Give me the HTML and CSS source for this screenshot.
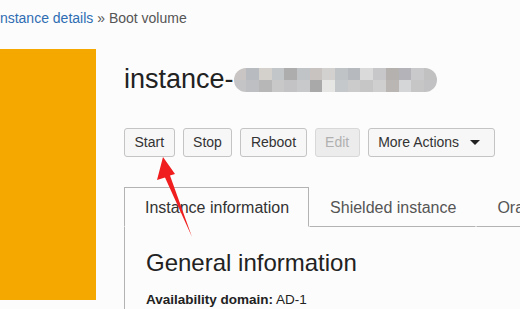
FILE: index.html
```html
<!DOCTYPE html>
<html lang="en">
<head>
    <meta charset="UTF-8">
    <meta name="viewport" content="width=device-width, initial-scale=1.0">
    <title>Boot volume</title>
    <link rel="stylesheet" href="styles.css">
</head>
<body>
    <div class="crumbs">
        <a href="#">Instance details</a> » <span>Boot volume</span>
    </div>

    <div class="layout">
        <div class="side"></div>

        <div class="main">
            <h1 class="title">
                instance-<span class="blur">
                    <i style="background:#c9c5c4"></i><i style="background:#b8bcc0"></i><i style="background:#d4d1cd"></i><i style="background:#c3c6c9"></i><i style="background:#adadad"></i><i style="background:#c1c4c7"></i><i style="background:#c8c3c0"></i><i style="background:#d3d1cf"></i><i style="background:#bfc3c6"></i><i style="background:#b6babe"></i><i style="background:#dadada"></i><i style="background:#c7c7c9"></i><i style="background:#b5b1af"></i><i style="background:#b3b3b9"></i><i style="background:#c9c9cb"></i><i style="background:#c1c1c1"></i>
                    <i style="background:#c4c4c6"></i><i style="background:#bdbfc2"></i><i style="background:#b7b7b7"></i><i style="background:#c8c8c8"></i><i style="background:#c3c3c5"></i><i style="background:#c7c9cb"></i><i style="background:#a9a9a9"></i><i style="background:#e6e6e4"></i><i style="background:#c5c8cb"></i><i style="background:#cbcbcb"></i><i style="background:#c6c6c6"></i><i style="background:#cfcfcf"></i><i style="background:#b9b6b4"></i><i style="background:#d5d6d8"></i><i style="background:#c6c6c6"></i><i style="background:#c2c2c4"></i>
                </span>
            </h1>

            <div class="actions">
                <button class="btn">Start</button>
                <button class="btn">Stop</button>
                <button class="btn">Reboot</button>
                <button class="btn" disabled>Edit</button>
                <button class="btn">More Actions <span class="caret"></span></button>
            </div>

            <div class="tabs">
                <div class="tab active">Instance information</div>
                <div class="tab">Shielded instance</div>
                <div class="tab">Oracle Cloud Agent</div>
                <div class="tab-fill"></div>
            </div>

            <div class="panel">
                <h2>General information</h2>
                <p class="field"><b>Availability domain:</b> AD-1</p>
            </div>
        </div>
    </div>

    <!-- red annotation arrow pointing at Start -->
    <svg class="arrow" width="520" height="309" viewBox="0 0 520 309">
        <polygon points="163,157 175,174 170,175.5 192,237 165,177.5 157,180" fill="#f01e1e"/>
    </svg>
</body>
</html>
```

FILE: styles.css
```css
body {
    font-family: "Liberation Sans", Arial, sans-serif;
    margin: 0;
    padding: 0;
    background-color: #fcfcfc;
    color: #333;
    width: 520px;
    height: 309px;
    overflow: hidden;
    position: relative;
}
.crumbs {
    font-size: 14px;
    line-height: 16px;
    padding-top: 10px;
    margin-bottom: 23px;
    margin-left: -4px;
    color: #555;
    white-space: nowrap;
}
.crumbs a {
    color: #2f6db3;
    text-decoration: none;
}
.layout {
    display: flex;
}
.side {
    width: 96px;
    height: 251px;
    flex-shrink: 0;
    background-color: #f5a800;
}
.main {
    padding-left: 28px;
    min-width: 0;
    flex: 1;
}
.title {
    display: flex;
    align-items: center;
    margin: 14px 0 0;
    font-size: 27px;
    line-height: 32px;
    font-weight: normal;
    color: #222;
}
.blur {
    display: grid;
    grid-template-columns: repeat(16, 1fr);
    width: 203px;
    height: 24px;
    margin-top: 2px;
    border-radius: 12px;
    overflow: hidden;
}
.actions {
    display: flex;
    gap: 8px;
    margin-top: 33px;
}
.btn {
    font-family: inherit;
    font-size: 14px;
    line-height: 17px;
    padding: 5px 9.5px;
    color: #333;
    background-color: #f7f7f7;
    border: 1px solid #c4c4c4;
    border-radius: 3px;
    display: flex;
    align-items: center;
}
.btn:disabled {
    color: #b0b0b0;
    background-color: #ececec;
    border-color: #d8d8d8;
}
.caret {
    width: 0;
    height: 0;
    margin: 0 4px 0 11px;
    border-left: 5px solid transparent;
    border-right: 5px solid transparent;
    border-top: 5px solid #222;
}
.tabs {
    display: flex;
    margin-top: 30px;
    white-space: nowrap;
}
.tab {
    font-size: 16px;
    line-height: 19px;
    padding: 10px 19px 9px 20px;
    color: #555;
    border: 1px solid transparent;
    border-bottom-color: #b3b3b3;
}
.tab.active {
    color: #333;
    border-color: #b3b3b3;
    border-bottom-color: transparent;
}
.tab-fill {
    flex: 1;
    border-bottom: 1px solid #b3b3b3;
}
.panel {
    border-left: 1px solid #b3b3b3;
    padding: 22px 0 0 21px;
    height: 100px;
}
.panel h2 {
    margin: 0;
    font-size: 24px;
    line-height: 28px;
    font-weight: normal;
    color: #222;
}
.field {
    margin: 15px 0 0;
    font-size: 13.5px;
    line-height: 16px;
    color: #222;
}
.arrow {
    position: absolute;
    left: 0;
    top: 0;
    pointer-events: none;
}
```
